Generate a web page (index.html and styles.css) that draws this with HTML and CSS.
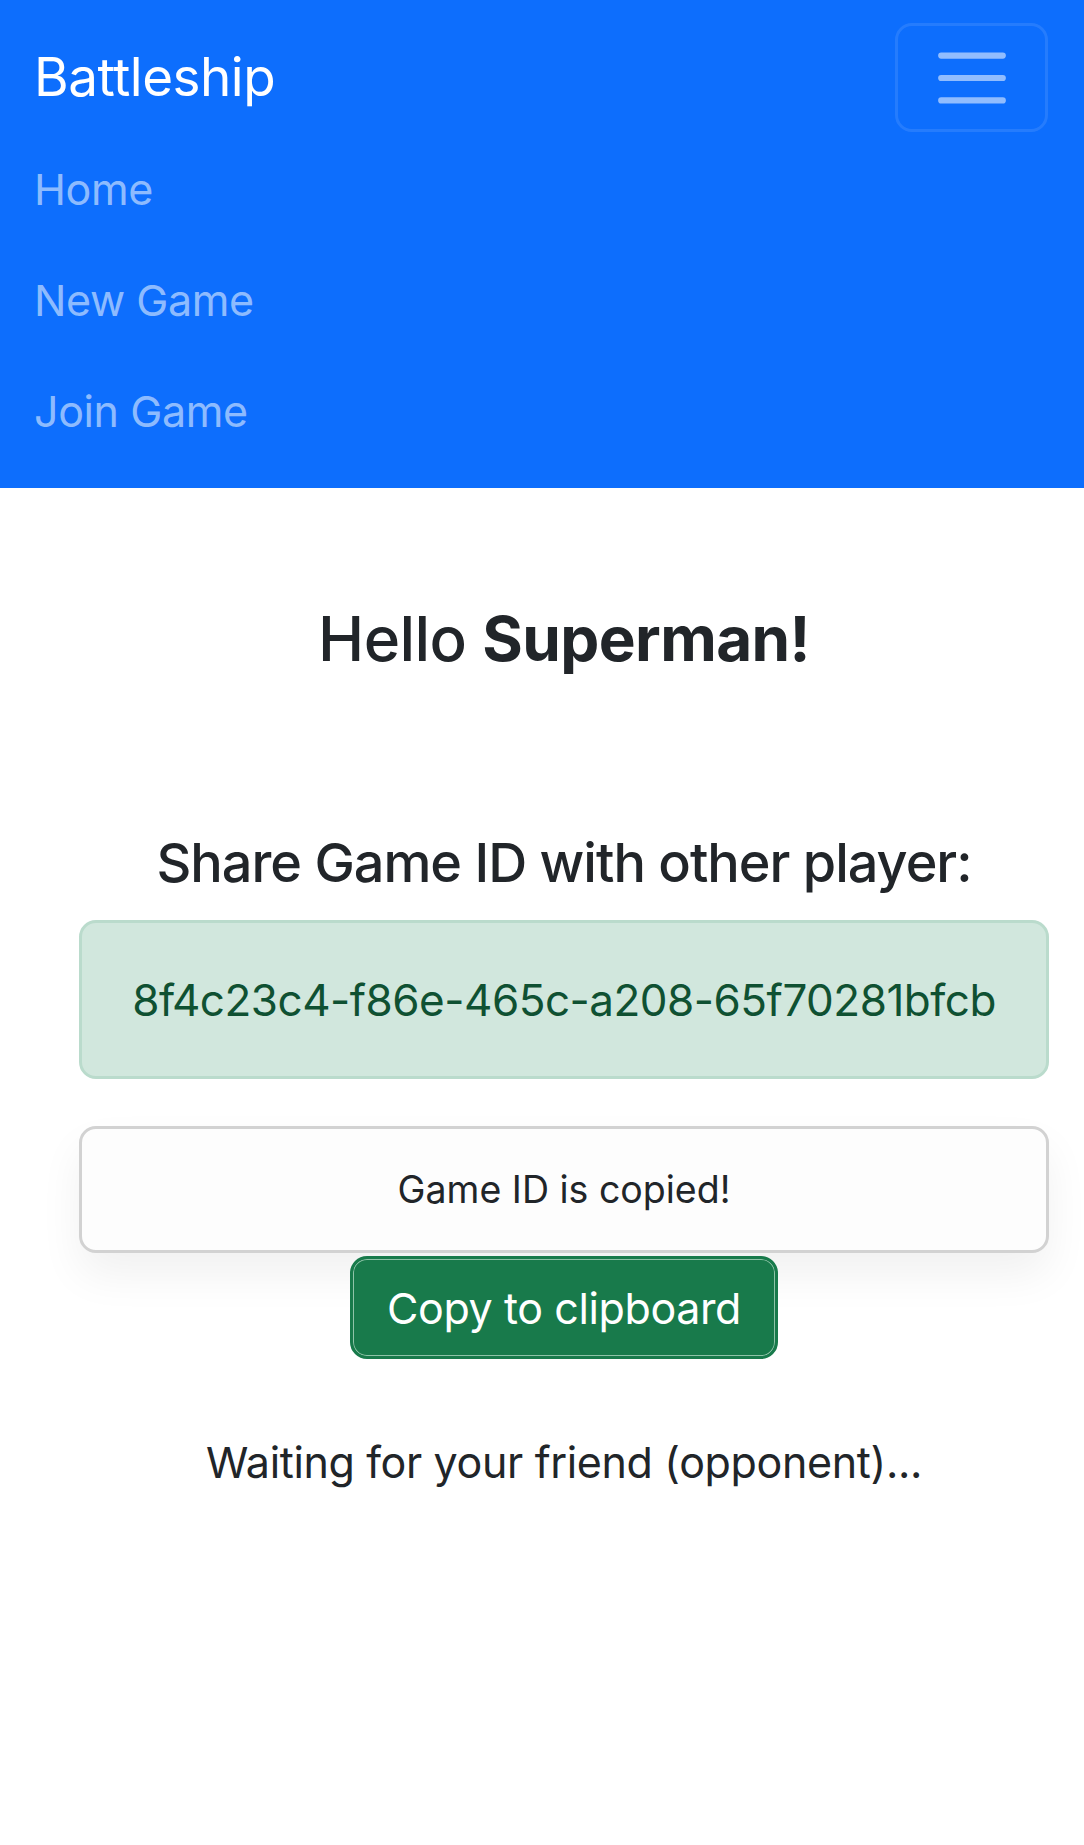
FILE: index.html
```html
<!DOCTYPE html>
<html lang="en">
<head>
<meta charset="utf-8">
<title>Battleship</title>
<link rel="stylesheet" href="styles.css">
</head>
<body>
<nav class="navbar">
  <div class="navbar-head">
    <a class="brand" href="#">Battleship</a>
    <button class="toggler" type="button" aria-label="Toggle navigation">
      <svg class="toggler-icon" viewBox="0 0 30 30">
        <path d="M4 7h22M4 15h22M4 23h22" stroke="rgba(255,255,255,0.55)" stroke-width="2.2" stroke-linecap="round" fill="none"/>
      </svg>
    </button>
  </div>
  <ul class="nav-links">
    <li><a href="#">Home</a></li>
    <li><a href="#">New Game</a></li>
    <li><a href="#">Join Game</a></li>
  </ul>
</nav>
<main class="content">
  <h3 class="hello">Hello <strong>Superman!</strong></h3>
  <h4 class="share">Share Game ID with other player:</h4>
  <div class="alert">8f4c23c4-f86e-465c-a208-65f70281bfcb</div>
  <div class="copied">Game ID is copied!</div>
  <button class="btn-copy" type="button">Copy to clipboard</button>
  <p class="waiting">Waiting for your friend (opponent)...</p>
</main>
</body>
</html>
```
FILE: styles.css
```css
* { box-sizing: border-box; }
html, body {
  margin: 0;
  padding: 0;
  background: #fff;
  font-family: Inter, "Noto Sans", sans-serif;
  color: #212529;
}
.navbar {
  background: #0d6efd;
  padding: 22px 36px 22px 34px;
  height: 488px;
}
.navbar-head {
  display: flex;
  justify-content: space-between;
  align-items: center;
  height: 111px;
}
.brand {
  color: #fff;
  text-decoration: none;
  font-size: 53px;
  line-height: 111px;
  letter-spacing: -0.5px;
}
.toggler {
  width: 153px;
  height: 109px;
  border: 3px solid rgba(255,255,255,0.1);
  border-radius: 17px;
  background: transparent;
  padding: 0;
  display: flex;
  align-items: center;
  justify-content: center;
}
.toggler-icon { display: block; width: 84px; height: 84px; }
.nav-links {
  list-style: none;
  margin: 0;
  padding: 0;
}
.nav-links li {
  height: 111px;
  display: flex;
  align-items: center;
}
.nav-links a {
  color: rgba(255,255,255,0.55);
  text-decoration: none;
  font-size: 43px;
  letter-spacing: -0.4px;
}
.content {
  padding: 0 35px 0 79px;
  text-align: center;
}
.hello {
  margin: 112px 0 0;
  font-size: 62px;
  line-height: 77px;
  font-weight: 500;
  letter-spacing: -0.6px;
}
.hello strong { font-weight: 700; }
.share {
  margin: 153px 0 24px;
  font-size: 54px;
  line-height: 66px;
  font-weight: 500;
  letter-spacing: -1px;
}
.alert {
  height: 159px;
  background: #d1e7dd;
  border: 3px solid #badbcc;
  border-radius: 17px;
  color: #0f5132;
  font-size: 44px;
  display: flex;
  align-items: center;
  justify-content: center;
  letter-spacing: -0.5px;
}
.copied {
  margin-top: 47px;
  height: 127px;
  background: #fdfdfd;
  border: 3px solid #d2d2d2;
  border-radius: 17px;
  box-shadow: 0 22px 44px rgba(0,0,0,0.06);
  font-size: 37.5px;
  display: flex;
  align-items: center;
  justify-content: center;
  letter-spacing: 0;
}
.btn-copy {
  display: inline-flex;
  align-items: center;
  justify-content: center;
  margin-top: 3px;
  width: 428px;
  height: 103px;
  background: #187a4b;
  color: #fff;
  border: 3px solid #187a4b;
  box-shadow: inset 0 0 0 1px #8fc3a8;
  border-radius: 17px;
  font-family: Inter, "Noto Sans", sans-serif;
  font-size: 43px;
  letter-spacing: -0.4px;
  padding: 0;
}
.waiting {
  margin: 70px 0 0;
  font-size: 43px;
  line-height: 66px;
  letter-spacing: -0.35px;
}
```
